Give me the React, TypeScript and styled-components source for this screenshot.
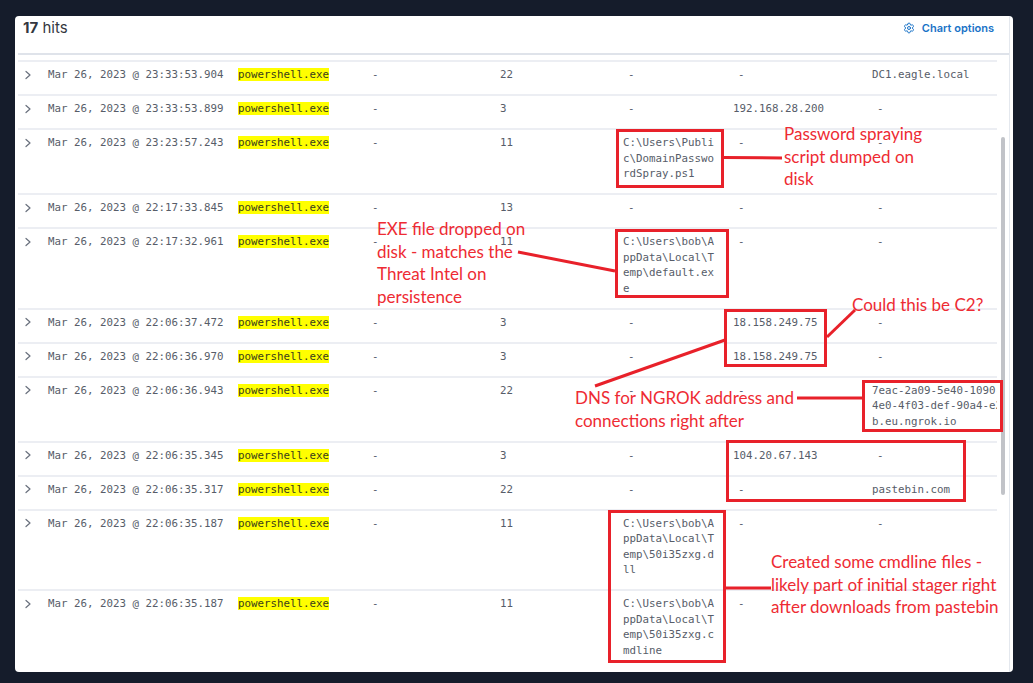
import React from "react";
import styled, { createGlobalStyle } from "styled-components";
import { Settings } from "lucide-react";

const GlobalStyle = createGlobalStyle`
  html, body { margin: 0; padding: 0; background: #151c2b; }
  body { font-family: Inter, "Noto Sans", sans-serif; }
  * { box-sizing: border-box; }
`;

const Page = styled.div`
  position: relative;
  width: 1033px;
  height: 683px;
  padding: 16px 20px 11px 15px;
  background: #151c2b;
  overflow: hidden;
`;

const Panel = styled.section`
  position: relative;
  width: 998px;
  height: 656px;
  background: #ffffff;
  border-radius: 4px;
  padding: 0 3px;
  overflow: hidden;
  display: flex;
  flex-direction: column;
`;

const Frame = styled.div`
  flex: 1;
  min-height: 0;
  display: flex;
  flex-direction: column;
  border-right: 1px solid #e4e8ee;
`;

const Header = styled.header`
  height: 39px;
  flex: none;
  display: flex;
  align-items: flex-start;
  justify-content: space-between;
  padding: 2px 15px 0 5px;
  border-bottom: 2px solid #dfe3ea;
`;

const Hits = styled.div`
  font-size: 15px;
  line-height: 20px;
  color: #343741;
  b { font-weight: 700; }
`;

const ChartOptions = styled.button`
  display: flex;
  align-items: center;
  gap: 7px;
  border: 0;
  background: none;
  padding: 0;
  font-family: Inter, "Noto Sans", sans-serif;
  font-size: 11px;
  font-weight: 600;
  line-height: 20px;
  color: #1a73c7;
`;

const TableWrap = styled.div`
  margin-top: 5px;
  width: 979px;
  flex: 1;
  min-height: 0;
  overflow: hidden;
`;

const Row = styled.div`
  display: grid;
  grid-template-columns: 30px 190px 129px 133px 123px 110px 139px 148px;
  width: 1002px;
  border-top: 2px solid #eceef3;
  padding: 5px 0 11.5px;
  font-family: "DejaVu Sans Mono", "Liberation Mono", monospace;
  font-size: 10.8px;
  line-height: 15.5px;
  color: #575d69;
`;

const Cell = styled.div`
  padding-right: 14px;
  word-break: break-all;
  min-width: 0;
`;

const Toggle = styled.div`
  height: 15.5px;
  display: flex;
  align-items: center;
  padding-left: 6px;
  color: #69707d;
`;

const Empty = styled.span`
  padding-left: 5px;
`;

const Mark = styled.mark`
  background: #ffff00;
  color: #3a3d1c;
`;

const Thumb = styled.div`
  position: absolute;
  left: 986px;
  top: 121px;
  width: 4px;
  height: 358px;
  border-radius: 2px;
  background: #c1c3c8;
`;

const Overlay = styled.div`
  position: absolute;
  inset: 0;
  pointer-events: none;
`;

const Marks = styled.svg`
  position: absolute;
  left: 0;
  top: 0;
`;

const Note = styled.div<{ $x: number; $y: number }>`
  position: absolute;
  left: ${(p) => p.$x}px;
  top: ${(p) => p.$y}px;
  font-family: Lato, "Open Sans", sans-serif;
  font-size: 17px;
  line-height: 22.5px;
  color: #ee2b33;
  white-space: nowrap;
`;

type Hit = {
  ts: string;
  c4: string;
  c5?: string;
  c6?: string;
  c7?: string;
};

const hits: Hit[] = [
  { ts: "Mar 26, 2023 @ 23:33:53.904", c4: "22", c7: "DC1.eagle.local" },
  { ts: "Mar 26, 2023 @ 23:33:53.899", c4: "3", c6: "192.168.28.200" },
  { ts: "Mar 26, 2023 @ 23:23:57.243", c4: "11", c5: "C:\\Users\\Public\\DomainPasswordSpray.ps1" },
  { ts: "Mar 26, 2023 @ 22:17:33.845", c4: "13" },
  { ts: "Mar 26, 2023 @ 22:17:32.961", c4: "11", c5: "C:\\Users\\bob\\AppData\\Local\\Temp\\default.exe" },
  { ts: "Mar 26, 2023 @ 22:06:37.472", c4: "3", c6: "18.158.249.75" },
  { ts: "Mar 26, 2023 @ 22:06:36.970", c4: "3", c6: "18.158.249.75" },
  { ts: "Mar 26, 2023 @ 22:06:36.943", c4: "22", c7: "7eac-2a09-5e40-1090-4e0-4f03-def-90a4-e2b.eu.ngrok.io" },
  { ts: "Mar 26, 2023 @ 22:06:35.345", c4: "3", c6: "104.20.67.143" },
  { ts: "Mar 26, 2023 @ 22:06:35.317", c4: "22", c7: "pastebin.com" },
  { ts: "Mar 26, 2023 @ 22:06:35.187", c4: "11", c5: "C:\\Users\\bob\\AppData\\Local\\Temp\\50i35zxg.dll" },
  { ts: "Mar 26, 2023 @ 22:06:35.187", c4: "11", c5: "C:\\Users\\bob\\AppData\\Local\\Temp\\50i35zxg.cmdline" },
];

const Value = ({ v }: { v?: string }) => <Cell>{v ? v : <Empty>-</Empty>}</Cell>;

const Chevron = () => (
  <svg width="8" height="10" viewBox="0 0 8 10" fill="none">
    <path d="M2 1.5 L6 5 L2 8.5" stroke="currentColor" strokeWidth="1.2" strokeLinecap="round" strokeLinejoin="round" />
  </svg>
);

const RED = "#e8212a";

const boxes = [
  [616, 129, 724, 188],
  [615, 229, 729, 298],
  [724, 309, 827, 367],
  [862, 380, 1003, 432],
  [726, 440, 966, 502],
  [608, 510, 726, 663],
];

const lines = [
  [724, 157.5, 782, 158],
  [518, 252, 615, 271],
  [827, 337, 855, 310],
  [595, 386, 725, 340],
  [797, 398, 862, 398],
  [726, 588, 771, 588],
];

export default function App() {
  return (
    <>
      <GlobalStyle />
      <Page>
        <Panel>
          <Frame>
            <Header>
              <Hits>
                <b>17</b> hits
              </Hits>
              <ChartOptions>
                <Settings size={12} strokeWidth={2} />
                Chart options
              </ChartOptions>
            </Header>
            <TableWrap>
              {hits.map((h, i) => (
                <Row key={i}>
                  <Toggle>
                    <Chevron />
                  </Toggle>
                  <Cell>{h.ts}</Cell>
                  <Cell>
                    <Mark>powershell.exe</Mark>
                  </Cell>
                  <Value />
                  <Cell>{h.c4}</Cell>
                  <Value v={h.c5} />
                  <Value v={h.c6} />
                  <Value v={h.c7} />
                </Row>
              ))}
            </TableWrap>
          </Frame>
          <Thumb />
        </Panel>
        <Overlay>
          <Marks width="1033" height="683" viewBox="0 0 1033 683">
            {boxes.map(([x1, y1, x2, y2], i) => (
              <rect
                key={i}
                x={x1 + 1.5}
                y={y1 + 1.5}
                width={x2 - x1 - 3}
                height={y2 - y1 - 3}
                fill="none"
                stroke={RED}
                strokeWidth="3"
              />
            ))}
            {lines.map(([x1, y1, x2, y2], i) => (
              <line key={i} x1={x1} y1={y1} x2={x2} y2={y2} stroke={RED} strokeWidth="3" />
            ))}
          </Marks>
          <Note $x={784} $y={123}>
            Password spraying
            <br />
            script dumped on
            <br />
            disk
          </Note>
          <Note $x={377} $y={218}>
            EXE file dropped on
            <br />
            disk - matches the
            <br />
            Threat Intel on
            <br />
            persistence
          </Note>
          <Note $x={852} $y={294}>Could this be C2?</Note>
          <Note $x={575} $y={387}>
            DNS for NGROK address and
            <br />
            connections right after
          </Note>
          <Note $x={771} $y={551}>
            Created some cmdline files -
            <br />
            likely part of initial stager right
            <br />
            after downloads from pastebin
          </Note>
        </Overlay>
      </Page>
    </>
  );
}
